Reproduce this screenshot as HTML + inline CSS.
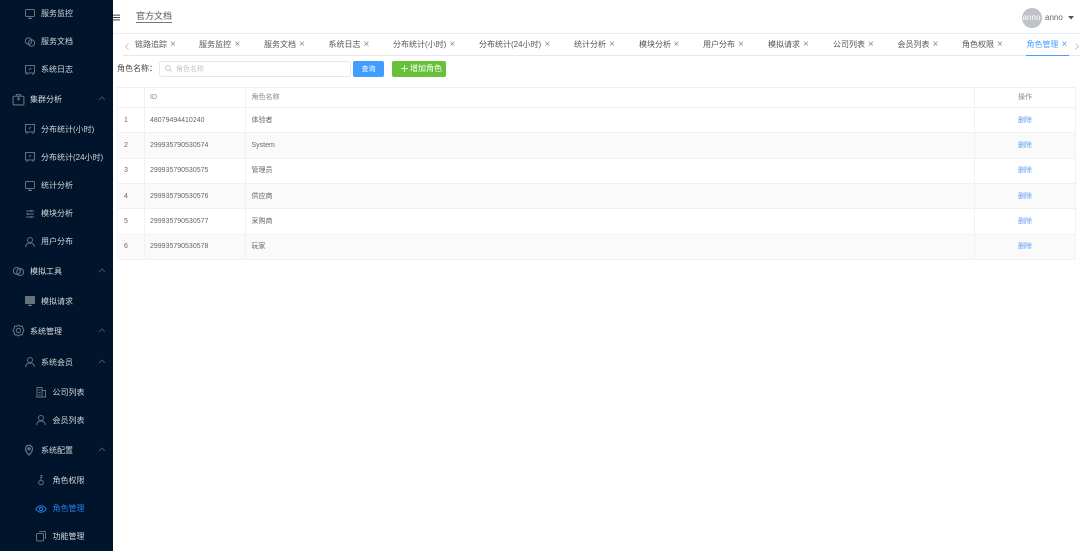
<!DOCTYPE html>
<html lang="zh"><head><meta charset="utf-8"><title>角色管理</title>
<style>
*{box-sizing:border-box}
html,body{margin:0;padding:0;width:1080px;height:551px;overflow:hidden;background:#fff}
body{font-family:"Liberation Sans","Noto Sans CJK SC",sans-serif;position:relative;filter:blur(.3px)}
.a{position:absolute;white-space:nowrap}
#side{position:absolute;left:0;top:0;width:112.5px;height:551px;background:#00152b;overflow:hidden}
.m{position:absolute;white-space:nowrap;font-size:8px;line-height:12px;color:#d3d6da;height:12px}
.i{position:absolute;width:12px;height:12px;fill:none;stroke:#66717e;stroke-width:1}
.c{position:absolute;left:98px;width:8px;height:6px;fill:none;stroke:#4d5b6a;stroke-width:.8}
.t{position:absolute;top:39px;font-size:8px;line-height:12px;color:#555;white-space:nowrap}
.x{position:absolute;top:38px;font-size:10px;line-height:14px;color:#888}
.l{position:absolute;background:#ebeef5}
.d{position:absolute;font-size:7px;line-height:10px;color:#666;white-space:nowrap}
.del{color:#5f9ff5}
.r{position:absolute;left:117px;width:959px;background:#fafafa}
</style></head><body>
<div id="side">
<svg class="i" style="left:24px;top:8px" viewBox="0 0 12 12"><rect x="1.5" y="1.5" width="9" height="7" rx="1"/><path d="M4 10.5h4M6 8.5v2"/></svg><div class="m" style="left:41px;top:8px">服务监控</div>
<svg class="i" style="left:24px;top:36px" viewBox="0 0 12 12"><circle cx="4.5" cy="5" r="3.2"/><circle cx="7.5" cy="7" r="3.2"/></svg><div class="m" style="left:41px;top:36px">服务文档</div>
<svg class="i" style="left:24px;top:64px" viewBox="0 0 12 12"><rect x="1.5" y="1.5" width="9" height="7.5"/><path d="M3 9v2M9 9v2M5 6l2-2"/></svg><div class="m" style="left:41px;top:64px">系统日志</div>
<svg class="i" style="left:12px;top:93px;width:13px;height:13px" viewBox="0 0 12 12"><rect x="1" y="3" width="10" height="8" rx="1"/><path d="M4 3V1.500h4V3M6 3v4M4.500 5.500h3"/></svg><div class="m" style="left:30px;top:94px;color:#dcdfe2">集群分析</div>
<svg class="c" style="top:96px" viewBox="0 0 8 6"><path d="M1 4l3-3 3 3"/></svg>
<svg class="i" style="left:24px;top:123px" viewBox="0 0 12 12"><rect x="1.500" y="1.500" width="9" height="7.500"/><path d="M3 9v2M9 9v2M5 6l2-2"/></svg><div class="m" style="left:41px;top:124px">分布统计(小时)</div>
<svg class="i" style="left:24px;top:151px" viewBox="0 0 12 12"><rect x="1.500" y="1.500" width="9" height="7.500"/><path d="M3 9v2M9 9v2M5 6l2-2"/></svg><div class="m" style="left:41px;top:152px">分布统计(24小时)</div>
<svg class="i" style="left:24px;top:180px" viewBox="0 0 12 12"><rect x="1.500" y="1.500" width="9" height="7" rx="1"/><path d="M4 10.500h4M6 8.500v2"/></svg><div class="m" style="left:41px;top:180px">统计分析</div>
<svg class="i" style="left:24px;top:208px" viewBox="0 0 12 12"><path d="M2 3h8M2 6h8M2 9h8M7 2v2M4 5v2M7 8v2"/></svg><div class="m" style="left:41px;top:208px">模块分析</div>
<svg class="i" style="left:24px;top:236px" viewBox="0 0 12 12"><circle cx="6" cy="4" r="2.500"/><path d="M1.500 11c.5-3 2.500-4 4.500-4s4 1 4.500 4"/></svg><div class="m" style="left:41px;top:236px">用户分布</div>
<svg class="i" style="left:12px;top:265px;width:13px;height:13px" viewBox="0 0 12 12"><circle cx="4.500" cy="5.500" r="3.200"/><circle cx="7.500" cy="6.500" r="3.200"/></svg><div class="m" style="left:30px;top:266px;color:#dcdfe2">模拟工具</div>
<svg class="c" style="top:268px" viewBox="0 0 8 6"><path d="M1 4l3-3 3 3"/></svg>
<svg class="i" style="left:24px;top:295px" viewBox="0 0 12 12"><rect x="1.500" y="1.500" width="9" height="7" fill="#66717e"/><path d="M4 10.500h4M6 8.500v2"/></svg><div class="m" style="left:41px;top:296px">模拟请求</div>
<svg class="i" style="left:12px;top:324px;width:13px;height:13px" viewBox="0 0 12 12"><circle cx="6" cy="6" r="2"/><path d="M6 1l1.500 1 2 0 .5 2 1 2-1 2-.5 2-2 0-1.500 1-1.500-1-2 0-.5-2-1-2 1-2 .5-2 2 0z"/></svg><div class="m" style="left:30px;top:326px;color:#dcdfe2">系统管理</div>
<svg class="c" style="top:328px" viewBox="0 0 8 6"><path d="M1 4l3-3 3 3"/></svg>
<svg class="i" style="left:24px;top:356px" viewBox="0 0 12 12"><circle cx="6" cy="4" r="2.500"/><path d="M1.500 11c.5-3 2.500-4 4.500-4s4 1 4.500 4"/></svg><div class="m" style="left:41px;top:357px">系统会员</div>
<svg class="c" style="top:359px" viewBox="0 0 8 6"><path d="M1 4l3-3 3 3"/></svg>
<svg class="i" style="left:35px;top:386px" viewBox="0 0 12 12"><path d="M2 11V1.500h5V11M7 4.500h3.500V11M1 11h10M3.500 4h2M3.500 6.500h2M3.500 9h2"/></svg><div class="m" style="left:52.500px;top:387px">公司列表</div>
<svg class="i" style="left:35px;top:414px" viewBox="0 0 12 12"><circle cx="6" cy="4" r="2.500"/><path d="M1.500 11c.5-3 2.500-4 4.500-4s4 1 4.500 4"/></svg><div class="m" style="left:52.500px;top:415px">会员列表</div>
<svg class="i" style="left:23px;top:444px" viewBox="0 0 12 12"><path d="M6 11C3.500 8.500 2.500 6.500 2.500 4.800a3.500 3.500 0 0 1 7 0C9.500 6.500 8.500 8.500 6 11z" stroke-width="1.300"/><circle cx="6" cy="4.800" r="1.200" fill="#66717e"/></svg><div class="m" style="left:41px;top:445px">系统配置</div>
<svg class="c" style="top:447px" viewBox="0 0 8 6"><path d="M1 4l3-3 3 3"/></svg>
<svg class="i" style="left:35px;top:474px" viewBox="0 0 12 12"><circle cx="6" cy="8.500" r="2.300"/><path d="M6 6V1.500h1.500M6 3.500h1.500"/></svg><div class="m" style="left:52.500px;top:475px">角色权限</div>
<svg class="i" style="left:35px;top:503px;stroke:#1f7fe8" viewBox="0 0 12 12"><path d="M.8 6C2.500 3.500 4 2.800 6 2.800S9.500 3.500 11.200 6C9.500 8.500 8 9.200 6 9.200S2.500 8.500.8 6z"/><circle cx="6" cy="6" r="1.600"/></svg><div class="m" style="left:52.500px;top:503px;color:#1f7fe8">角色管理</div>
<svg class="i" style="left:35px;top:530px" viewBox="0 0 12 12"><rect x="1.500" y="3.500" width="7" height="7.500" rx="1"/><path d="M4 1.500h5.500a1 1 0 0 1 1 1V9"/></svg><div class="m" style="left:52.500px;top:531px">功能管理</div>
</div>

<svg class="a" style="left:113px;top:14px;width:7px;height:7px" viewBox="0 0 8 8"><path d="M0 1.300h8M0 4h8M0 6.700h8" stroke="#444" stroke-width="1.200"/></svg>
<div class="a" style="left:136px;top:10px;font-size:9px;line-height:12px;color:#555;border-bottom:1px solid #777;height:12.500px">官方文档</div>

<div class="a" style="left:1021.500px;top:8px;width:20px;height:20px;border-radius:50%;background:#bfc2c8;color:#fff;font-size:8px;line-height:20px;text-align:center;overflow:hidden">anno</div>
<div class="a" style="left:1045px;top:12px;font-size:8px;line-height:11px;color:#666">anno</div>
<svg class="a" style="left:1068px;top:16px;width:6px;height:4px" viewBox="0 0 6 4"><path d="M0 0h6L3 3.500z" fill="#555"/></svg>

<div class="l" style="left:113px;top:33px;width:967px;height:1px"></div>
<div class="l" style="left:123px;top:55px;width:957px;height:1px;background:#e6e8ec"></div>
<div class="a" style="left:1026px;top:55px;width:43px;height:1px;background:#409eff"></div>
<svg class="a" style="left:125px;top:43px;width:4px;height:7px" viewBox="0 0 4 7"><path d="M3.500.5L.5 3.500l3 3" fill="none" stroke="#bbb" stroke-width=".8"/></svg>
<svg class="a" style="left:1075px;top:43px;width:4px;height:7px" viewBox="0 0 4 7"><path d="M.5.5l3 3-3 3" fill="none" stroke="#bbb" stroke-width=".8"/></svg>

<div class="t" style="left:135px">链路追踪</div><div class="x" style="left:170px">×</div>
<div class="t" style="left:199px">服务监控</div><div class="x" style="left:234.500px">×</div>
<div class="t" style="left:264px">服务文档</div><div class="x" style="left:299px">×</div>
<div class="t" style="left:328.500px">系统日志</div><div class="x" style="left:363.500px">×</div>
<div class="t" style="left:393px">分布统计(小时)</div><div class="x" style="left:449.500px">×</div>
<div class="t" style="left:479px">分布统计(24小时)</div><div class="x" style="left:544.500px">×</div>
<div class="t" style="left:574px">统计分析</div><div class="x" style="left:609px">×</div>
<div class="t" style="left:639px">模块分析</div><div class="x" style="left:673.500px">×</div>
<div class="t" style="left:703px">用户分布</div><div class="x" style="left:738px">×</div>
<div class="t" style="left:768px">模拟请求</div><div class="x" style="left:803px">×</div>
<div class="t" style="left:833px">公司列表</div><div class="x" style="left:868px">×</div>
<div class="t" style="left:897.500px">会员列表</div><div class="x" style="left:932.500px">×</div>
<div class="t" style="left:962px">角色权限</div><div class="x" style="left:997px">×</div>
<div class="t" style="left:1026.500px;color:#409eff">角色管理</div><div class="x" style="left:1061.500px;color:#409eff">×</div>

<div class="a" style="left:117px;top:63px;font-size:8px;line-height:12px;color:#444">角色名称：</div>
<div class="a" style="left:158.500px;top:61px;width:192px;height:16px;border:1px solid #e4e7ed;border-radius:3px;background:#fff"></div>
<svg class="a" style="left:165px;top:65px;width:7px;height:7px" viewBox="0 0 7 7"><circle cx="3" cy="3" r="2.400" fill="none" stroke="#bbb" stroke-width=".7"/><path d="M5 5l1.500 1.500" stroke="#bbb" stroke-width=".7"/></svg>
<div class="a" style="left:176px;top:65px;font-size:7px;line-height:10px;color:#c0c4cc">角色名称</div>
<div class="a" style="left:353px;top:61px;width:31px;height:16px;background:#409eff;border-radius:2px;color:#fff;font-size:7px;line-height:17px;text-align:center">查询</div>
<div class="a" style="left:391.500px;top:61px;width:54.500px;height:16px;background:#67c23a;border-radius:2px"></div>
<svg class="a" style="left:400.500px;top:65px;width:7px;height:7px" viewBox="0 0 7 7"><path d="M3.500 0v7M0 3.500h7" stroke="#fff" stroke-width=".8"/></svg>
<div class="a" style="left:410px;top:63px;font-size:8px;line-height:12px;color:#fff">增加角色</div>

<div class="r" style="top:132.500px;height:25.500px"></div>
<div class="r" style="top:183px;height:25.500px"></div>
<div class="r" style="top:234px;height:25px"></div>

<div class="l" style="left:117px;top:87px;width:959px;height:1px;background:#f0f1f5"></div>
<div class="l" style="left:117px;top:107px;width:959px;height:1px;background:#f0f1f5"></div>
<div class="l" style="left:117px;top:132px;width:959px;height:1px;background:#f0f1f5"></div>
<div class="l" style="left:117px;top:157.500px;width:959px;height:1px;background:#f0f1f5"></div>
<div class="l" style="left:117px;top:183px;width:959px;height:1px;background:#f0f1f5"></div>
<div class="l" style="left:117px;top:208px;width:959px;height:1px;background:#f0f1f5"></div>
<div class="l" style="left:117px;top:233.500px;width:959px;height:1px;background:#f0f1f5"></div>
<div class="l" style="left:117px;top:259px;width:959px;height:1px;background:#f0f1f5"></div>
<div class="l" style="left:117px;top:87px;width:1px;height:173px;background:#f0f1f5"></div>
<div class="l" style="left:144px;top:87px;width:1px;height:173px;background:#f0f1f5"></div>
<div class="l" style="left:245px;top:87px;width:1px;height:173px;background:#f0f1f5"></div>
<div class="l" style="left:974px;top:87px;width:1px;height:173px;background:#f0f1f5"></div>
<div class="l" style="left:1075px;top:87px;width:1px;height:173px;background:#f0f1f5"></div>

<div class="d" style="left:150px;top:93px;color:#888">ID</div>
<div class="d" style="left:251.500px;top:93px;color:#888">角色名称</div>
<div class="d" style="left:1018px;top:93px;color:#888">操作</div>

<div class="d" style="left:124px;top:116px">1</div><div class="d" style="left:150px;top:116px">48079494410240</div><div class="d" style="left:251.500px;top:116px">体验者</div><div class="d del" style="left:1018px;top:116px">删除</div>
<div class="d" style="left:124px;top:141px">2</div><div class="d" style="left:150px;top:141px">299935790530574</div><div class="d" style="left:251.500px;top:141px">System</div><div class="d del" style="left:1018px;top:141px">删除</div>
<div class="d" style="left:124px;top:166px">3</div><div class="d" style="left:150px;top:166px">299935790530575</div><div class="d" style="left:251.500px;top:166px">管理员</div><div class="d del" style="left:1018px;top:166px">删除</div>
<div class="d" style="left:124px;top:192px">4</div><div class="d" style="left:150px;top:192px">299935790530576</div><div class="d" style="left:251.500px;top:192px">供应商</div><div class="d del" style="left:1018px;top:192px">删除</div>
<div class="d" style="left:124px;top:217px">5</div><div class="d" style="left:150px;top:217px">299935790530577</div><div class="d" style="left:251.500px;top:217px">采购商</div><div class="d del" style="left:1018px;top:217px">删除</div>
<div class="d" style="left:124px;top:242px">6</div><div class="d" style="left:150px;top:242px">299935790530578</div><div class="d" style="left:251.500px;top:242px">玩家</div><div class="d del" style="left:1018px;top:242px">删除</div>
</body></html>
